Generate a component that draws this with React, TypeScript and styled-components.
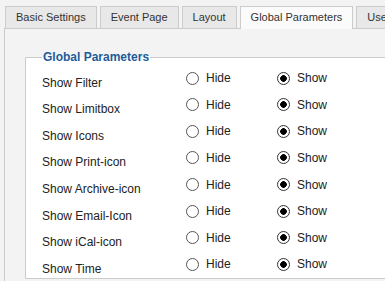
import styled, { createGlobalStyle } from "styled-components";

const GlobalStyle = createGlobalStyle`
  body {
    margin: 0;
    background: #f3f3f3;
    font-family: "Liberation Sans", Arial, sans-serif;
  }
`;

const Page = styled.div`
  padding: 6px 0 0 4px;
  overflow: hidden;
  height: 281px;
  box-sizing: border-box;
`;

const TabBar = styled.div`
  display: flex;
  gap: 3px;
  padding-left: 1px;
  white-space: nowrap;
  position: relative;
  z-index: 1;
`;

const Tab = styled.div<{ $active?: boolean }>`
  box-sizing: border-box;
  height: ${(p) => (p.$active ? "23px" : "22px")};
  margin-bottom: ${(p) => (p.$active ? "-1px" : "0")};
  padding: 0 10px;
  border: 1px solid #cccccc;
  border-bottom: none;
  background: ${(p) => (p.$active ? "#fbfbfb" : "#e8e8e8")};
  color: #333333;
  font-size: 11px;
  line-height: 20px;
  flex-shrink: 0;
`;

const Panel = styled.div`
  border-top: 1px solid #cccccc;
  border-left: 1px solid #cccccc;
  background: #f3f3f3;
  padding: 21px 0 0 20px;
  height: 300px;
`;

const Fieldset = styled.fieldset`
  margin: 0;
  border: 1px solid #cccccc;
  border-right: none;
  padding: 1px 0 0 16px;
  background: #ffffff;
  min-width: 0;
`;

const Legend = styled.legend`
  padding: 0 1px;
  font-size: 12px;
  line-height: 14px;
  font-weight: bold;
  color: #1d5c99;
`;

const Row = styled.div`
  display: flex;
  height: 26.57px;
  align-items: center;
`;

const Label = styled.div`
  width: 144px;
  flex-shrink: 0;
  padding-top: 9px;
  font-size: 12px;
  color: #222222;
`;

const Option = styled.label`
  display: flex;
  align-items: center;
  gap: 7px;
  width: 91px;
  flex-shrink: 0;
  font-size: 12px;
  color: #222222;
`;

const Radio = styled.input`
  appearance: none;
  margin: 0;
  width: 13px;
  height: 13px;
  box-sizing: border-box;
  border: 1px solid #555555;
  border-radius: 50%;
  background: #ffffff;

  &:checked {
    border-color: #333333;
    background: radial-gradient(circle, #000000 0 3px, #ffffff 3.6px);
  }
`;

const tabs = ["Basic Settings", "Event Page", "Layout", "Global Parameters", "User Settings"];

const params = [
  "Show Filter",
  "Show Limitbox",
  "Show Icons",
  "Show Print-icon",
  "Show Archive-icon",
  "Show Email-Icon",
  "Show iCal-icon",
  "Show Time",
];

export default function App() {
  return (
    <>
      <GlobalStyle />
      <Page>
        <TabBar>
          {tabs.map((t) => (
            <Tab key={t} $active={t === "Global Parameters"}>
              {t}
            </Tab>
          ))}
        </TabBar>
        <Panel>
          <Fieldset>
            <Legend>Global Parameters</Legend>
            {params.map((p, i) => (
              <Row key={p}>
                <Label>{p}</Label>
                <Option>
                  <Radio type="radio" name={`param${i}`} />
                  Hide
                </Option>
                <Option>
                  <Radio type="radio" name={`param${i}`} defaultChecked />
                  Show
                </Option>
              </Row>
            ))}
          </Fieldset>
        </Panel>
      </Page>
    </>
  );
}
